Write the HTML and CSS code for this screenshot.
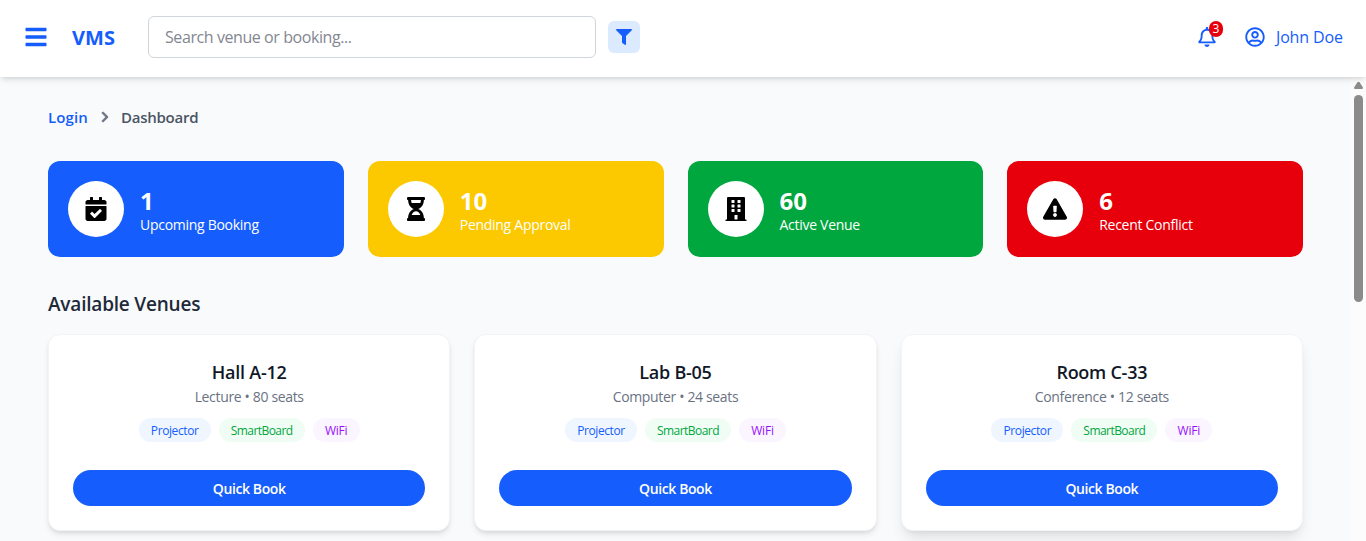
FILE: index.html
```html
<!DOCTYPE html>
<html lang="en">
<head>
<meta charset="utf-8">
<title>VMS Dashboard</title>
<link rel="stylesheet" href="styles.css">
</head>
<body>
<header class="topbar">
  <svg class="menu-icon" viewBox="0 0 448 512"><rect y="60" width="448" height="72" rx="16"/><rect y="220" width="448" height="72" rx="16"/><rect y="380" width="448" height="72" rx="16"/></svg>
  <span class="brand">VMS</span>
  <div class="search"><span class="t-search">Search venue or booking...</span></div>
  <div class="filter"><svg viewBox="0 0 512 512"><path d="M487.976 0H24.028C2.71 0-8.047 25.866 7.058 40.971L192 225.941V432c0 7.831 3.821 15.17 10.237 19.662l80 55.98C298.02 518.69 320 507.493 320 487.98V225.941l184.947-184.97C520.021 25.896 509.338 0 487.976 0z"/></svg></div>
  <div class="account">
    <div class="bell"><svg viewBox="0 0 448 512"><path d="M439.39 362.29c-19.32-20.76-55.47-51.99-55.47-154.29 0-77.7-54.48-139.9-127.94-155.16V32c0-17.67-14.32-32-31.98-32s-31.98 14.33-31.98 32v20.84C118.56 68.1 64.08 130.3 64.08 208c0 102.3-36.15 133.53-55.47 154.29-6 6.45-8.66 14.16-8.61 21.71.11 16.4 12.98 32 32.1 32h383.8c19.12 0 32-15.6 32.1-32 .05-7.55-2.61-15.27-8.61-21.71zM67.53 368c21.22-27.97 44.42-74.33 44.53-159.42 0-.2-.06-.38-.06-.58 0-61.86 50.14-112 112-112s112 50.14 112 112c0 .2-.06.38-.06.58.11 85.1 23.31 131.46 44.53 159.42H67.53zM224 512c35.32 0 63.97-28.65 63.97-64H160.03c0 35.35 28.65 64 63.97 64z"/></svg><span class="badge">3</span></div>
    <svg class="user-icon" viewBox="0 0 496 512"><path d="M248 104c-53 0-96 43-96 96s43 96 96 96 96-43 96-96-43-96-96-96zm0 144c-26.5 0-48-21.5-48-48s21.5-48 48-48 48 21.5 48 48-21.5 48-48 48zm0-240C111 8 0 119 0 256s111 248 248 248 248-111 248-248S385 8 248 8zm0 448c-49.7 0-95.1-18.3-130.1-48.4 14.9-23 40.4-38.6 69.6-39.5 20.8 6.4 40.6 9.6 60.5 9.6s39.7-3.1 60.5-9.6c29.2 1 54.7 16.5 69.6 39.5-35 30.1-80.4 48.4-130.1 48.4zm162.7-84.1c-24.4-31.4-62.1-51.9-105.1-51.9-10.2 0-26 9.6-57.6 9.6-31.5 0-47.4-9.6-57.6-9.6-42.9 0-80.6 20.5-105.1 51.9C61.9 339.2 48 299.2 48 256c0-110.3 89.7-200 200-200s200 89.7 200 200c0 43.2-13.9 83.2-37.3 115.9z"/></svg>
    <span class="user-name">John Doe</span>
  </div>
</header>
<div class="body-row">
<main class="content">
  <nav class="crumbs">
    <span class="crumb-link">Login</span>
    <svg viewBox="0 0 320 512"><path d="M285.476 272.971L91.132 467.314c-9.373 9.373-24.569 9.373-33.941 0l-22.667-22.667c-9.357-9.357-9.375-24.522-.04-33.901L188.505 256 34.484 101.255c-9.335-9.379-9.317-24.544.04-33.901l22.667-22.667c9.373-9.373 24.569-9.373 33.941 0L285.475 239.03c9.373 9.372 9.373 24.568.001 33.941z"/></svg>
    <span class="crumb-here">Dashboard</span>
  </nav>
  <section class="stats">
    <div class="stat blue"><div class="disc"><svg viewBox="0 0 448 512"><path d="M436 160H12c-6.627 0-12-5.373-12-12v-36c0-26.51 21.49-48 48-48h48V12c0-6.627 5.373-12 12-12h40c6.627 0 12 5.373 12 12v52h128V12c0-6.627 5.373-12 12-12h40c6.627 0 12 5.373 12 12v52h48c26.51 0 48 21.49 48 48v36c0 6.627-5.373 12-12 12zM12 192h424c6.627 0 12 5.373 12 12v260c0 26.51-21.49 48-48 48H48c-26.51 0-48-21.49-48-48V204c0-6.627 5.373-12 12-12zm333.296 95.947l-28.169-28.398c-4.667-4.705-12.265-4.736-16.97-.068L194.12 364.665l-45.98-46.352c-4.667-4.705-12.266-4.736-16.971-.068l-28.397 28.17c-4.705 4.667-4.736 12.265-.068 16.97l82.601 83.269c4.667 4.705 12.265 4.736 16.97.068l142.953-141.805c4.705-4.667 4.736-12.265.068-16.97z"/></svg></div><div><div class="num">1</div><div class="label">Upcoming Booking</div></div></div>
    <div class="stat yellow"><div class="disc"><svg viewBox="0 0 384 512"><path d="M360 0H24C10.745 0 0 10.745 0 24v16c0 13.255 10.745 24 24 24 0 90.965 51.016 167.734 120.842 192C75.016 280.266 24 357.035 24 448c-13.255 0-24 10.745-24 24v16c0 13.255 10.745 24 24 24h336c13.255 0 24-10.745 24-24v-16c0-13.255-10.745-24-24-24 0-90.965-51.016-167.734-120.842-192C308.984 231.734 360 154.965 360 64c13.255 0 24-10.745 24-24V24c0-13.255-10.745-24-24-24zm-75.078 384H99.08c17.059-46.797 52.096-80 92.92-80 40.821 0 75.862 33.196 92.922 80zm.019-256H99.078C91.988 108.548 88 86.748 88 64h208c0 22.805-3.987 44.587-11.059 64z"/></svg></div><div><div class="num">10</div><div class="label">Pending Approval</div></div></div>
    <div class="stat green"><div class="disc"><svg viewBox="0 0 448 512"><path d="M436 480h-20V24c0-13.255-10.745-24-24-24H56C42.745 0 32 10.745 32 24v456H12c-6.627 0-12 5.373-12 12v20h448v-20c0-6.627-5.373-12-12-12z"/><g fill="#fff"><rect x="128" y="64" width="64" height="64" rx="12"/><rect x="256" y="64" width="64" height="64" rx="12"/><rect x="128" y="160" width="64" height="64" rx="12"/><rect x="256" y="160" width="64" height="64" rx="12"/><rect x="128" y="256" width="64" height="64" rx="12"/><rect x="256" y="256" width="64" height="64" rx="12"/><rect x="192" y="384" width="64" height="96" rx="10"/></g></svg></div><div><div class="num">60</div><div class="label">Active Venue</div></div></div>
    <div class="stat red"><div class="disc"><svg viewBox="0 0 576 512"><path d="M569.517 440.013C587.975 472.007 564.806 512 527.94 512H48.054c-36.937 0-59.999-40.055-41.577-71.987L246.423 23.985c18.467-32.009 64.72-31.951 83.154 0l239.94 416.028zM288 354c-25.405 0-46 20.595-46 46s20.595 46 46 46 46-20.595 46-46-20.595-46-46-46zm-43.673-165.346l7.418 136c.347 6.364 5.609 11.346 11.982 11.346h48.546c6.373 0 11.635-4.982 11.982-11.346l7.418-136c.375-6.874-5.098-12.654-11.982-12.654h-63.383c-6.884 0-12.356 5.78-11.981 12.654z"/></svg></div><div><div class="num">6</div><div class="label">Recent Conflict</div></div></div>
  </section>
  <h2 class="section-title">Available Venues</h2>
  <section class="venues">
    <article class="venue"><h3>Hall A-12</h3><p>Lecture • 80 seats</p><div class="chips"><span class="chip c-blue">Projector</span><span class="chip c-green">SmartBoard</span><span class="chip c-purple">WiFi</span></div><button class="book">Quick Book</button></article>
    <article class="venue"><h3>Lab B-05</h3><p>Computer • 24 seats</p><div class="chips"><span class="chip c-blue">Projector</span><span class="chip c-green">SmartBoard</span><span class="chip c-purple">WiFi</span></div><button class="book">Quick Book</button></article>
    <article class="venue raised"><h3>Room C-33</h3><p>Conference • 12 seats</p><div class="chips"><span class="chip c-blue">Projector</span><span class="chip c-green">SmartBoard</span><span class="chip c-purple">WiFi</span></div><button class="book">Quick Book</button></article>
  </section>
</main>
<div class="scroll"><span class="arrow"></span><span class="thumb"></span></div>
</div>
</body>
</html>
```
FILE: styles.css
```css
* { box-sizing: border-box; }
body { margin: 0; height: 541px; overflow: hidden; display: flex; flex-direction: column; background: #f9fafb; font-family: "Open Sans", "Noto Sans", sans-serif; }
h2, h3, p { margin: 0; }
svg { display: block; }
.topbar { height: 77px; flex: none; background: #fff; position: relative; z-index: 1; box-shadow: 0 4px 6px -1px rgba(0,0,0,.1), 0 2px 4px -2px rgba(0,0,0,.1); display: flex; align-items: center; padding: 0 24px 3px; color: #155dfc; fill: #155dfc; }
.menu-icon { width: 24px; height: 24px; }
.brand { margin-left: 24px; width: 44px; font-size: 20px; font-weight: 700; letter-spacing: .1px; white-space: nowrap; }
.search { margin-left: 32px; width: 448px; height: 42px; border: 1px solid #d1d5dc; border-radius: 6px; padding: 0 16px; display: flex; align-items: center; font-size: 16px; color: #838791; }
.t-search { letter-spacing: -.42px; }
.filter { margin-left: 12px; width: 32px; height: 32px; border-radius: 6px; background: #dbeafe; display: grid; place-items: center; }
.filter svg { width: 16px; height: 16px; }
.account { margin-left: auto; display: flex; align-items: center; }
.bell { position: relative; margin-right: 28px; }
.bell svg { width: 20px; height: 20px; }
.badge { position: absolute; left: 12px; top: -6px; width: 14px; height: 16px; border-radius: 8px; background: #e7000b; color: #fff; font-size: 12px; line-height: 16px; text-align: center; }
.user-icon { width: 20px; height: 20px; margin-right: 11px; }
.user-name { font-size: 16px; letter-spacing: -.15px; width: 66px; white-space: nowrap; }
.body-row { flex: 1; display: flex; min-height: 0; }
.content { flex: 1; padding: 28px 48px 0; overflow: hidden; }
.crumbs { display: flex; align-items: center; height: 24px; font-size: 15px; font-weight: 600; margin-bottom: 32px; line-height: 24px; }
.crumb-link { color: #155dfc; width: 41px; letter-spacing: .1px; }
.crumbs svg { width: 12px; height: 12px; margin: 0 10px; fill: #6a7282; stroke: #6a7282; stroke-width: 24; }
.crumb-here { color: #4a5565; letter-spacing: -.25px; }
.stats { display: grid; grid-template-columns: repeat(4, 1fr); gap: 24px; }
.stat { height: 96px; border-radius: 12px; padding: 20px; display: flex; align-items: center; gap: 16px; color: #fff; white-space: nowrap; }
.blue { background: #155dfc; }
.yellow { background: #fcc800; }
.green { background: #00a63e; }
.red { background: #e7000b; }
.disc { width: 56px; height: 56px; border-radius: 50%; background: #fff; display: grid; place-items: center; }
.disc svg { width: 24px; height: 24px; }
.num { font-size: 24px; font-weight: 700; line-height: 32px; height: 30px; padding-top: 1px; }
.label { font-size: 14px; line-height: 22px; height: 20px; letter-spacing: -.28px; }
.section-title { margin: 33px 0 16px; height: 28px; line-height: 28px; font-size: 19px; font-weight: 600; letter-spacing: -.2px; color: #1e2939; }
.venues { display: grid; grid-template-columns: repeat(3, 1fr); gap: 24px; padding-bottom: 30px; }
.venue { height: 197px; background: #fff; border: 1px solid #f3f4f6; border-radius: 12px; padding: 24px; text-align: center; box-shadow: 0 4px 6px -1px rgba(0,0,0,.1), 0 2px 4px -2px rgba(0,0,0,.1); white-space: nowrap; }
.raised { box-shadow: 0 10px 15px -3px rgba(0,0,0,.1), 0 4px 6px -4px rgba(0,0,0,.1); }
.venue h3 { height: 27px; line-height: 27px; font-size: 18px; font-weight: 600; letter-spacing: -.25px; color: #101828; }
.venue p { height: 20px; line-height: 21px; font-size: 14px; letter-spacing: -.34px; color: #6a7282; }
.chips { display: flex; justify-content: center; gap: 8px; margin-top: 12px; }
.chip { height: 24px; line-height: 25px; border-radius: 12px; font-size: 12px; letter-spacing: -.4px; }
.c-blue { width: 72px; background: #eff6ff; color: #155dfc; }
.c-green { width: 86px; background: #f0fdf4; color: #00a63e; letter-spacing: -.55px; }
.c-purple { width: 47px; background: #faf5ff; color: #9810fa; letter-spacing: -.2px; }
.book { display: block; width: 100%; height: 36px; margin-top: 28px; padding: 0; border: 0; border-radius: 18px; background: #155dfc; color: #fff; font: 600 14px "Open Sans", sans-serif; letter-spacing: -.4px; }
.scroll { width: 15px; background: #fcfcfc; display: flex; flex-direction: column; align-items: center; padding-top: 5px; }
.arrow { width: 9px; height: 7px; background: #8b8b8b; clip-path: polygon(40% 0, 60% 0, 100% 80%, 95% 100%, 5% 100%, 0 80%); }
.thumb { width: 9px; height: 207px; margin-top: 6px; border-radius: 5px; background: #8b8b8b; }
```
